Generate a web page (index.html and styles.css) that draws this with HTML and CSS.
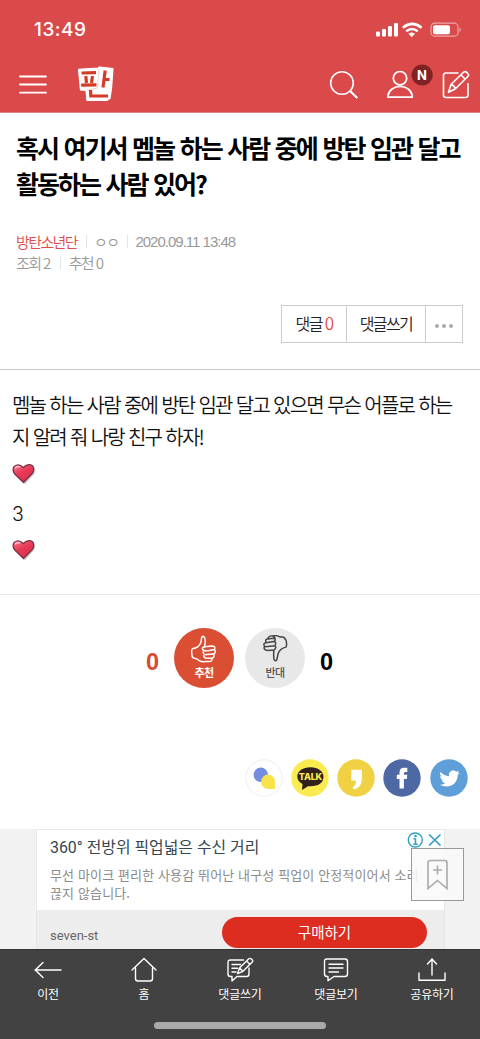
FILE: index.html
```html
<!DOCTYPE html>
<html lang="ko">
<head>
<meta charset="utf-8">
<meta name="viewport" content="width=device-width">
<title>판</title>
<link rel="stylesheet" href="styles.css">
</head>
<body>
<div class="app">
<header class="top">
  <div class="status">
    <span class="clock">13:49</span>
    <svg class="status-icons" width="88" height="18" viewBox="0 -.5 88 18">
      <g fill="#fff"><rect x="1" y="10" width="4" height="5" rx="1"/><rect x="7" y="7.5" width="4" height="7.500" rx="1"/><rect x="13" y="4.500" width="4" height="10.500" rx="1"/><rect x="19" y="1.500" width="4" height="13.500" rx="1"/>
      <path d="M36.700 15.200 33.800 12.300Q36.700 10.300 39.600 12.300Z" stroke="#fff" stroke-width=".7" stroke-linejoin="round"/></g>
      <g fill="none" stroke="#fff" stroke-width="2.500"><path d="M27.800 6.200Q37.200-1.500 46.600 6.200"/><path d="M31.200 9.800Q37 5.200 42.800 9.800"/></g>
      <rect x="56" y="1.700" width="27" height="13" rx="3.800" fill="none" stroke="#eda6a6" stroke-width="1.200"/>
      <rect x="58" y="3.800" width="17" height="9" rx="2" fill="#fff"/><path d="M84.500 6v4.500q1.500-.7 1.500-2.200T84.500 6" fill="#eda6a6"/>
    </svg>
  </div>
  <nav class="nav">
    <svg width="30" height="40" viewBox="18 65 30 40" stroke="#fff" stroke-width="1.800" stroke-linecap="round"><path d="M20 76.500H46M20 84.500H46M20 92.700H46"/></svg>
    <svg class="logo" width="40" height="40" viewBox="76 65 40 40">
      <path d="M78.500 69.300 98 68 99.500 67 113 68.500 111.500 88.500 110 98.500 107 100.300 87 100.500 86 90.500 80.500 90Z" fill="#fff" stroke="#fff" stroke-width="1.200" stroke-linejoin="round"/>
      <path d="M99 68.500 97.500 88 87 90" fill="none" stroke="#edc9c5" stroke-width=".8"/>
      <g fill="none" stroke="#d53c28" stroke-width="3.200"><path d="M81.500 73 96 72.700M85.800 76 86.500 83M92.500 76 91.500 83M81.200 85.200 96.500 84.900"/><path d="M105.200 70.500 103 87.500M105 79.500H109.500M90.500 90 90.800 96H108"/></g>
    </svg>
    <svg class="nav-search" width="32" height="36" viewBox="328 67 32 36" fill="none" stroke="#fff" stroke-width="1.600"><circle cx="342" cy="83" r="11.300"/><path d="m350 91 7.300 7" stroke-width="2.300"/></svg>
    <svg class="nav-user" width="48" height="44" viewBox="385 63 48 44"><g fill="none" stroke="#fff" stroke-width="1.700"><circle cx="400" cy="78.200" r="6.700"/><path d="M388 97.200V95.500A12.200 10.500 0 0 1 412.200 95.500V97.200Z" stroke-linejoin="round"/></g><circle cx="422.200" cy="75" r="10.600" fill="#812325"/><text x="422" y="79.800" text-anchor="middle" class="badge-text">N</text></svg>
    <svg width="30" height="36" viewBox="441 67 30 36" fill="none" stroke="#fff" stroke-width="1.600" stroke-linejoin="round"><path d="M458.500 73H446q-2.500 0-2.500 2.500V95q0 2.500 2.500 2.500H465.500q2.500 0 2.500-2.500V83"/><path d="M448.500 92.300 451 84.500 463.500 72.300Q465 70.800 466.800 72.400L467.800 73.500Q469.300 75 467.800 76.500L455.500 88.800ZM451 84.500Q454.500 85.500 455.500 88.800M461 75l4.300 4.300"/></svg>
  </nav>
</header>
<main>
  <section class="head">
    <h1>혹시 여기서 멤놀 하는 사람 중에 방탄 임관 달고<br>활동하는 사람 있어?</h1>
    <div class="meta"><span class="channel">방탄소년단</span><span class="writer">ㅇㅇ</span><span class="date">2020.09.11 13:48</span></div>
    <div class="meta meta2"><span>조회 2</span><span>추천 0</span></div>
    <div class="actions"><a class="a-count">댓글 <em>0</em></a><a class="a-write">댓글쓰기</a><a class="a-more"><i></i><i></i><i></i></a></div>
  </section>
  <article class="content">
    <p>멤놀 하는 사람 중에 방탄 임관 달고 있으면 무슨 어플로 하는<br>지 알려 줘 나랑 친구 하자!</p>
    <svg class="heart" width="25" height="23" viewBox="0 0 25 23"><defs><linearGradient id="hg" x1="0" y1="0" x2=".6" y2="1"><stop offset="0" stop-color="#f77b91"/><stop offset=".5" stop-color="#e83b59"/><stop offset="1" stop-color="#dc2c48"/></linearGradient></defs><path d="M13 21.500 3 11Q0 7 3 3.500 8 .5 12.500 5 18 .5 22 3.500 25 7 22 11.500Z" fill="#aaa" opacity=".5"/><path d="M11.500 19.500 2.800 11Q-.3 7 2.200 3.500 6.500-.2 11.300 4.500 16-.2 20.500 2.700 23 6.500 20.300 10.500Z" fill="url(#hg)" stroke="#793245" stroke-width="1.300"/><path d="M3 5.500Q5 2.300 8 4.300" fill="none" stroke="#ffb4c0" stroke-width="1.800"/></svg>
    <div class="three">3</div>
    <svg class="heart" width="25" height="23" viewBox="0 0 25 23"><path d="M13 21.500 3 11Q0 7 3 3.500 8 .5 12.500 5 18 .5 22 3.500 25 7 22 11.500Z" fill="#aaa" opacity=".5"/><path d="M11.500 19.500 2.800 11Q-.3 7 2.200 3.500 6.500-.2 11.300 4.500 16-.2 20.500 2.700 23 6.500 20.300 10.500Z" fill="url(#hg)" stroke="#793245" stroke-width="1.300"/><path d="M3 5.500Q5 2.300 8 4.300" fill="none" stroke="#ffb4c0" stroke-width="1.800"/></svg>
  </article>
  <section class="vote">
    <b class="up-count">0</b>
    <button class="up"><svg width="28" height="28" viewBox="0 0 30 30" fill="none" stroke="#fff" stroke-width="1.600" stroke-linejoin="round"><path d="M3 14.500Q9 14 11.700 8L12.500 2.500Q14-.5 16 3.500 17 7 15.500 12.500M3 14.500Q1.200 15.500 2 20.500 2 24.500 5 25 8 25.500 10 27.500 12 29 17 28.500H21Q24.500 27.500 23.300 25 27 23.500 25.300 20.500 28.500 18 26.200 15.500 28 12 23.500 11.700L16 12.500Q12.500 13.500 13.500 15.500 15 17.500 19.500 16.800L26 15.500M14 17.500Q14 21.500 18 21L25 20.300M14.500 21.500Q15 25 18.500 25H23.300"/></svg><span>추천</span></button>
    <button class="down"><svg width="28" height="28" viewBox="0 0 30 30" fill="none" stroke="#444" stroke-width="1.600" stroke-linejoin="round"><path d="M27 13Q20 14.500 18.300 20L17 26.500Q15 29 13.700 25.500L13.500 19 14 16M27 13Q28.500 6 24.500 2.500L20 2Q17 0 12.500 1 8 .5 7.500 4 4 4.500 5.500 8 1.500 9.500 4 12 2 15 6 16.500L14 16Q17 14 15 11.500L4.500 12.500M5.500 8.200 13.500 7Q17 7.500 15 11.300M7.500 4.200 13 3.500Q16.500 4 14.500 7M12.500 1Q15 1.500 15 4"/></svg><span>반대</span></button>
    <b class="down-count">0</b>
  </section>
  <div class="share">
    <svg width="38" height="38" viewBox="0 0 38 38"><circle cx="19" cy="19" r="18.200" fill="#fff" stroke="#eee"/><circle cx="15.800" cy="15.800" r="7.200" fill="#738de3"/><path d="M23.300 15.500A7.300 7.300 0 1 0 23.300 30.100H30V22.800A7 7 0 0 0 23.300 15.500" fill="#f8e34b"/></svg>
    <svg width="38" height="38" viewBox="0 0 38 38"><circle cx="19" cy="19" r="18.700" fill="#faec50"/><path d="M19.500 8.300C12 8.300 6.300 12.200 6.300 17.500Q6.300 22 11.500 25L11 31 17 27.200Q32 28 32.500 17.800C32.500 12.200 27 8.300 19.500 8.300" fill="#31201c"/><text x="19.400" y="21.300" text-anchor="middle" class="talk">TALK</text></svg>
    <svg width="38" height="38" viewBox="0 0 38 38"><circle cx="19" cy="19" r="18.700" fill="#f0d143"/><path d="M14.300 10.700H24.800V21Q24 29 17.200 30.500L15.500 28.500Q19 26.500 19 21.500H14.300Z" fill="#fff"/></svg>
    <svg width="38" height="38" viewBox="0 0 38 38"><circle cx="19" cy="19" r="18.700" fill="#4d68a2"/><path d="M16.500 29.500V20H13.800V15.700H16.500V13.500Q16.500 8.800 21 8.800H24.300V13H22.300Q20.900 13 20.900 14.500V15.700H24.300L23.800 20H20.900V29.500Z" fill="#fff"/></svg>
    <svg width="38" height="38" viewBox="0 0 38 38"><circle cx="19" cy="19" r="18.700" fill="#5e9fda"/><path d="M10.500 13Q14 17 19 17.200C18.400 13.500 21 11.500 23.400 11.500Q25 11.500 26.300 12.800L29 11.700 27.500 14.300 29.700 13.800 27.700 16C27.700 23 22.500 27.500 16.500 27.500Q12.500 27.500 9.800 25.700 13 25.800 15.200 24.200 12.500 23.800 11.600 21.300H13.300Q10.300 20.300 10.200 17L12 17.500Q9 15.500 10.500 13" fill="#fff"/></svg>
  </div>
  <section class="ad-wrap">
    <div class="ad">
      <div class="ad-copy"><h2>360° 전방위 픽업넓은 수신 거리</h2><p>무선 마이크 편리한 사용감 뛰어난 내구성 픽업이 안정적이어서 소리<br>끊지 않습니다.</p></div>
      <div class="ad-foot"><span>seven-st</span><a>구매하기</a></div>
      <svg class="ad-marks" width="36" height="18" viewBox="406 831 36 18" fill="none" stroke="#2f9fc6" stroke-width="1.400"><circle cx="415.300" cy="840" r="7"/><path d="M415.500 838.500V844M413.500 838.700H415.500M413.200 844.200H417.600" stroke-width="1.600"/><circle cx="415.500" cy="836" r=".6"/><path d="m429 834.500 11.500 11m0-11-11.500 11" stroke-width="1.700"/></svg>
    </div>
    <button class="mark"><svg width="24" height="32" viewBox="0 0 24 32" fill="none" stroke="#aaa" stroke-width="1.600"><path d="M2 29.500V4Q2 1.500 4.500 1.500H19Q21 1.500 21 4V29.500L11.500 21.500ZM11.500 6.500V15.500M7.200 11H16"/></svg></button>
  </section>
</main>
<footer class="bottom">
  <a><svg width="30" height="28" viewBox="0 0 30 28"><path d="M28 14H2M10 6.500 2.300 14 10 21.500"/></svg><span>이전</span></a>
  <a><svg width="30" height="28" viewBox="0 0 30 28"><path d="M3 14 15 2.500 27 14M6.500 12V22.500Q6.500 25 9 25H21Q23.500 25 23.500 22.500V12"/></svg><span>홈</span></a>
  <a><svg width="30" height="28" viewBox="0 0 30 28"><path d="M18.500 4H5.500Q3 4 3 6.500V18Q3 20.500 5.500 20.500H7V25L12 20.500H21.500Q24 20.500 24 18V12M7 8.500H15.500M7 12.300H12.500M7 16H11M12.500 17.500 14.500 12 23.500 3Q25 1.800 26.500 3L27 3.500Q28.500 5 27 6.300L18 15.300ZM14.500 12 18 15.300M21.500 5 25 8.500"/></svg><span>댓글쓰기</span></a>
  <a><svg width="30" height="28" viewBox="0 0 30 28"><path d="M6 3H24Q26.500 3 26.500 5.500V18Q26.500 20.500 24 20.500H13L7 24.700V20.500H6Q3.500 20.500 3.500 18V5.500Q3.500 3 6 3M8 8.300H22M8 12H22M8 16H17.500"/></svg><span>댓글보기</span></a>
  <a><svg width="30" height="28" viewBox="0 0 30 28"><path d="M2 17V24.300H28V17M15 19V3M10.500 8 15 3 19.500 8"/></svg><span>공유하기</span></a>
  <i class="home-bar"></i>
</footer>
</div>
</body>
</html>
```
FILE: styles.css
```css
* { box-sizing: border-box; }
body { margin: 0; background: #fff; color: #111; font-family: "Noto Sans CJK KR", sans-serif; }
.app { position: relative; width: 480px; height: 1039px; overflow: hidden; display: flex; flex-direction: column; }
svg { display: block; flex: none; }
button { border: 0; padding: 0; font: inherit; }
h1, h2, p { margin: 0; }
.top { height: 113px; flex: none; background: #da4a4a; border-bottom: 1px solid #dd8788; }
.status { height: 60px; display: flex; justify-content: space-between; padding: 21px 18px 0 34px; }
.clock { font: 500 19px/18px Inter, sans-serif; color: #fff; letter-spacing: .5px; }
.status-icons { margin-right: -1px; }
.nav { display: flex; align-items: center; height: 50px; padding: 0 9px 0 18px; }
.logo { margin-left: 28px; }
.nav-search { margin-left: auto; }
.nav-user { margin: 0 8px 0 25px; }
.badge-text { font: 700 13px Inter, sans-serif; fill: #fff; }
.talk { font: 800 9px Inter, sans-serif; fill: #faec50; letter-spacing: -.2px; }
main { flex: none; }
.head { height: 257px; border-bottom: 1px solid #cacaca; padding: 16px 17px 0 16px; }
h1 { font-weight: 700; font-size: 25px; line-height: 36px; letter-spacing: -2.040px; word-spacing: .700px; color: #000; white-space: nowrap; }
.meta { display: flex; height: 21px; margin-top: 30px; font-weight: 350; font-size: 15px; line-height: 21px; letter-spacing: -1.6px; color: #999; white-space: nowrap; }
.meta2 { margin-top: 0; }
.meta span + span { position: relative; margin-left: 10px; padding-left: 9px; }
.meta .writer { margin-left: 9px !important; padding-left: 8px !important; }
.meta .date { margin-left: 9px !important; padding-left: 8px !important; }
.meta span + span::before { content: ""; position: absolute; left: 0; top: 4px; height: 13px; border-left: 1px solid #e4e4e4; }
.meta .channel { color: #e24c49; }
.meta .date { font-family: "Liberation Sans", sans-serif; font-weight: 400; letter-spacing: -1px; line-height: 22px; }
.actions { display: flex; width: 182px; height: 38px; margin: 32px 0 0 auto; border: 1px solid #ccc; font-weight: 350; font-size: 16px; line-height: 34px; letter-spacing: -1.6px; color: #222; }
.actions a { border-right: 1px solid #ccc; text-align: center; }
.actions em { font-style: normal; font-size: 17px; color: #e24c49; }
.a-count { width: 65px; }
.a-write { width: 79px; }
.actions .a-more { flex: 1; border: 0; display: flex; justify-content: center; align-items: center; gap: 3px; padding-top: 4px; }
.a-more i { width: 4px; height: 4px; border-radius: 50%; background: #aaa; }
.content { height: 225px; padding: 19px 12px 0; border-bottom: 1px solid #e8e8e8; }
.content p { font-weight: 350; font-size: 20px; line-height: 32px; letter-spacing: -1.8px; word-spacing: .300px; white-space: nowrap; }
.heart { margin-top: 10px; }
.three { height: 32px; margin: 12px 0 -1px; font-family: Inter, sans-serif; font-weight: 300; font-size: 19.500px; line-height: 32px; }
.vote { height: 122px; display: flex; align-items: center; justify-content: center; gap: 11px; padding: 3px 1px 0 0; }
.vote b { font: 700 23.500px/30px "Liberation Sans", sans-serif; padding-top: 8px; }
.up-count { color: #da4b31; margin-right: 4px; }
.down-count { color: #000; margin-left: 4px; }
.vote button { width: 60px; height: 60px; border-radius: 50%; display: flex; flex-direction: column; align-items: center; padding-top: 7px; font-weight: 700; font-size: 11px; line-height: 16px; letter-spacing: -.7px; }
.vote button span { margin-top: 1px; }
.up { background: #da4e34; color: #fff; }
.down { background: #e8e8e8; color: #555; }
.vote .down span { font-weight: 500; }
.share { height: 112px; display: flex; justify-content: flex-end; gap: 8.200px; padding: 41.500px 12.500px 0 0; }
.ad-wrap { position: relative; height: 120px; background: #f2f2f2; padding-left: 36px; }
.ad { position: relative; width: 409px; height: 120px; border: 1px solid #e6e6e6; background: #fff; display: flex; flex-direction: column; }
.ad-copy { height: 80px; flex: none; padding: 5px 13px 0; white-space: nowrap; }
.ad h2 { font-weight: 400; font-size: 15.900px; line-height: 26px; color: #37474f; font-family: Roboto, "Noto Sans CJK KR", sans-serif; }
.ad p { margin-top: 5px; font-size: 13px; line-height: 18px; color: #8b8b8b; font-weight: 400; letter-spacing: .130px; }
.ad-foot { flex: 1; background: #ededed; display: flex; justify-content: space-between; padding: 7px 17px 0 13px; }
.ad-foot span { font: 400 13px/38px Roboto, sans-serif; color: #666; }
.ad-foot a { width: 205px; height: 31px; border-radius: 16px; background: #dc2d20; color: #fff; text-align: center; font-size: 14.500px; line-height: 29px; }
.ad-marks { position: absolute; right: 2px; top: 1px; }
.mark { position: absolute; left: 411px; top: 19px; width: 53px; height: 53px; border: 1px solid #999; background: rgba(249,249,249,.86); display: flex; align-items: center; justify-content: center; }
.bottom { position: absolute; left: 0; right: 0; bottom: 0; height: 90px; background: #424242; border-top: 1px solid #333; display: grid; grid-template-columns: repeat(5, 1fr); color: #fff; }
.bottom a { display: flex; flex-direction: column; align-items: center; padding-top: 6px; font-size: 12px; line-height: 20px; letter-spacing: -.2px; }
.bottom svg { fill: none; stroke: #fff; stroke-width: 1.400; stroke-linejoin: round; stroke-linecap: round; }
.home-bar { position: absolute; left: 154px; bottom: 10px; width: 172px; height: 7px; border-radius: 4px; background: #aaa; }
```
